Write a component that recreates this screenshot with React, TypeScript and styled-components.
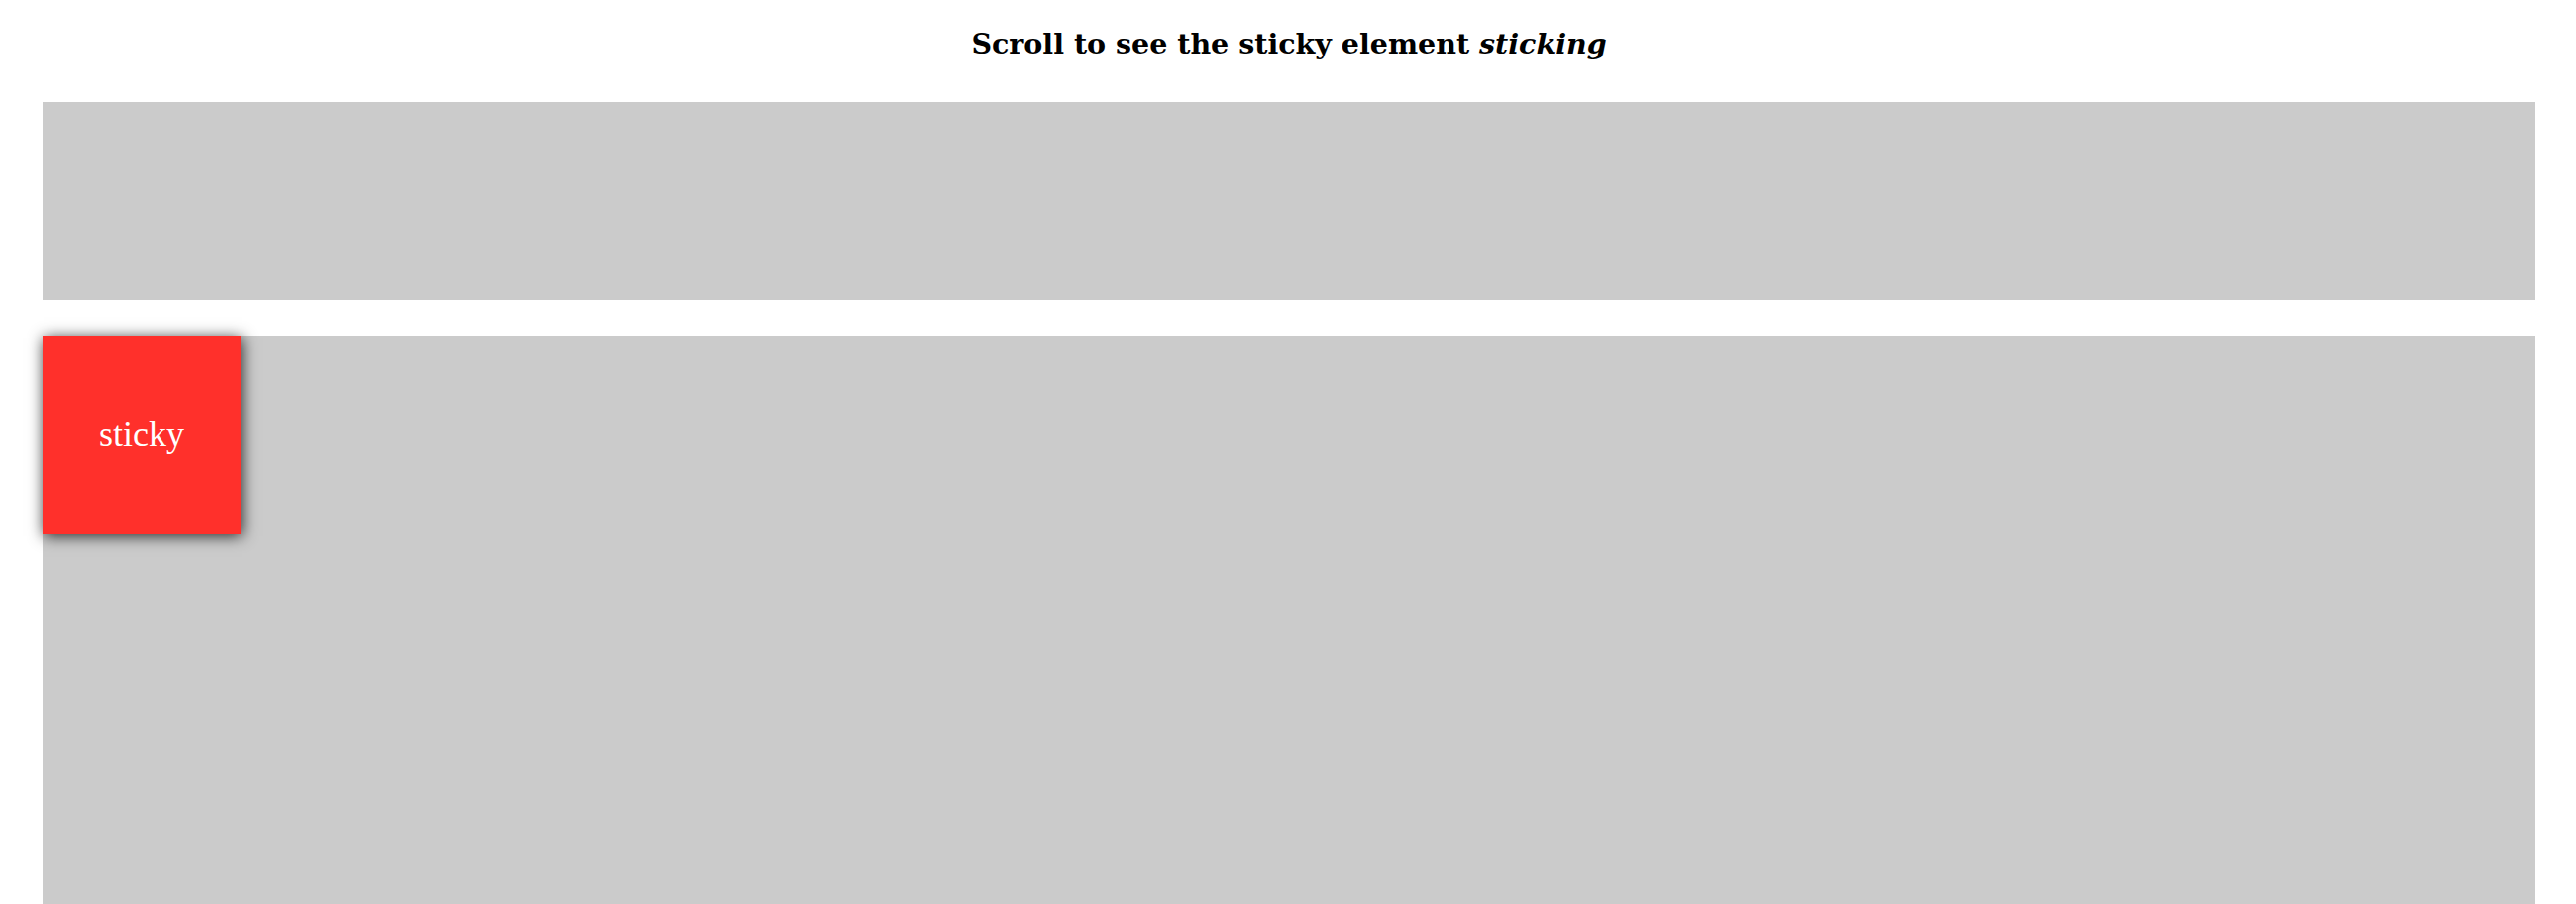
import React from "react";
import styled, { createGlobalStyle } from "styled-components";

const GlobalStyle = createGlobalStyle`
  html, body {
    margin: 0;
    padding: 0;
    background: #ffffff;
  }
  body {
    font-family: "Liberation Serif", "DejaVu Serif", serif;
    color: #000000;
  }
`;

const Page = styled.div`
  padding: 0 41px 0 43px;
`;

const Title = styled.h1`
  margin: 0;
  padding: 23px 0 38px;
  font-family: "DejaVu Serif", "Liberation Serif", serif;
  font-size: 28.5px;
  line-height: 42px;
  font-weight: 700;
  text-align: center;
`;

const Block = styled.section<{ $height: number }>`
  background: #cbcbcb;
  height: ${(p) => p.$height}px;
  margin-bottom: 36px;
`;

const Sticky = styled.div`
  position: sticky;
  top: 0;
  width: 200px;
  height: 200px;
  background: #ff302b;
  color: #ffffff;
  font-size: 36px;
  display: flex;
  align-items: center;
  justify-content: center;
  padding-bottom: 2px;
  box-sizing: border-box;
  box-shadow: 1px 2px 14px rgba(0, 0, 0, 0.8);
`;

const App = () => {
  return (
    <>
      <GlobalStyle />
      <Page>
        <Title>
          Scroll to see the sticky element <em>sticking</em>
        </Title>
        <Block $height={200} />
        <Block $height={1200}>
          <Sticky>sticky</Sticky>
        </Block>
      </Page>
    </>
  );
};

export default App;
